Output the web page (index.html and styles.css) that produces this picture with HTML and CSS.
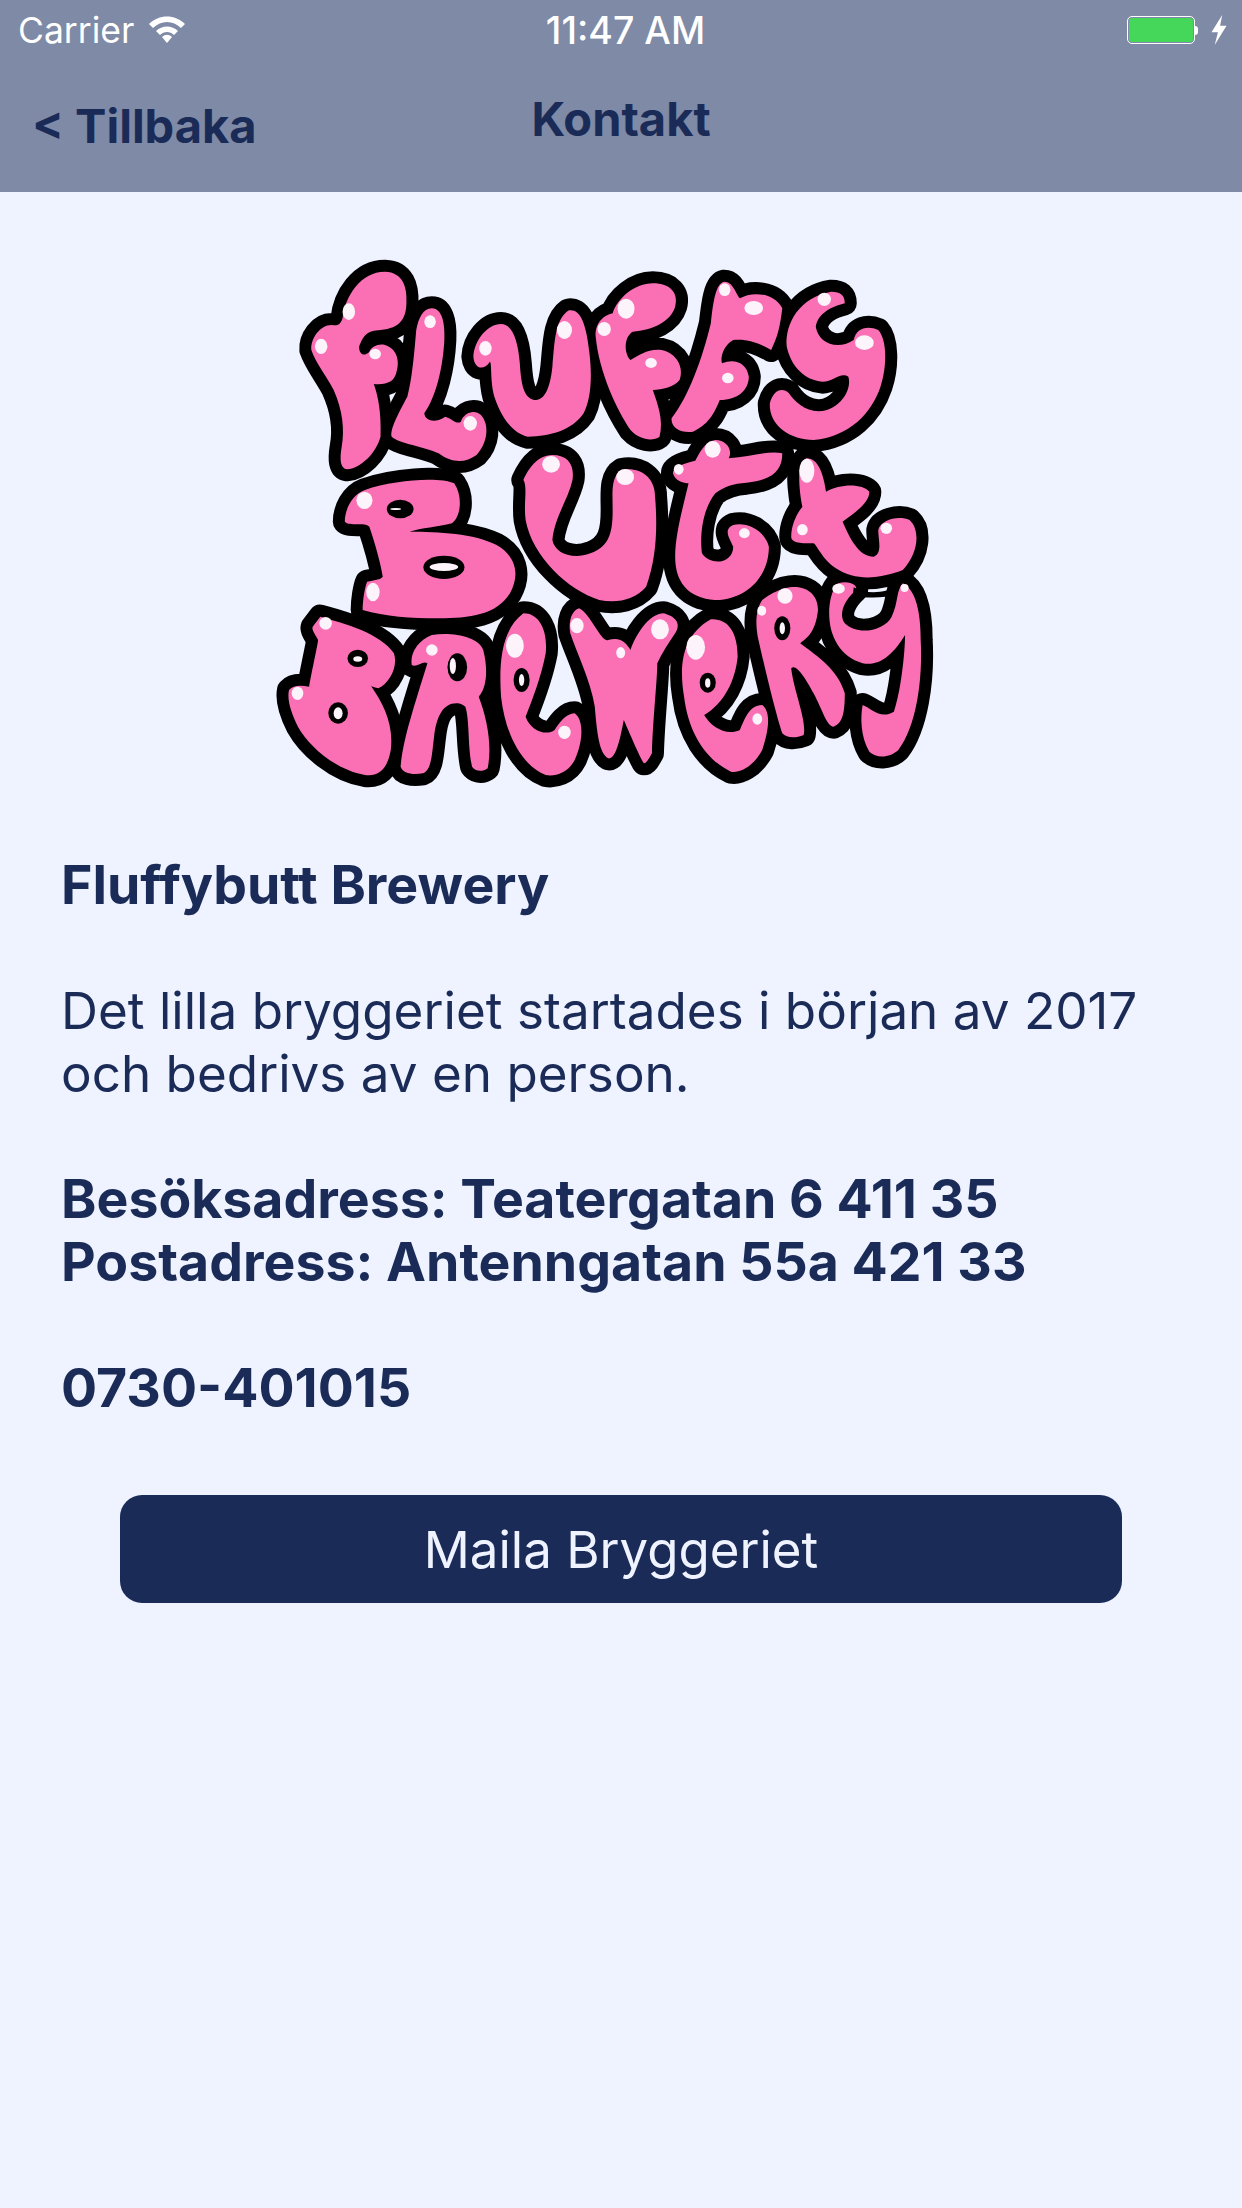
FILE: index.html
```html
<!DOCTYPE html>
<html lang="sv">
<head>
    <meta charset="UTF-8">
    <meta name="viewport" content="width=device-width, initial-scale=1.0">
    <title>Kontakt</title>
    <link rel="stylesheet" href="styles.css">
</head>
<body>
    <!-- Statusrad och navigering -->
    <header class="top">
        <div class="status">
            <div class="status-left">
                <span>Carrier</span>
                <svg class="wifi" viewBox="0 0 38 28">
                    <path d="M1 9 C11 -1 27 -1 37 9 L33 13 C25 5 13 5 5 13 Z"/>
                    <path d="M8 16 C14 10 24 10 30 16 L26 20 C22 16 16 16 12 20 Z"/>
                    <path d="M14 22 C17 19 21 19 24 22 L19 28 Z"/>
                </svg>
            </div>
            <span class="clock">11:47 AM</span>
            <div class="status-right">
                <div class="battery"><div class="battery-level"></div></div>
                <div class="battery-cap"></div>
                <svg class="bolt" viewBox="0 0 16 28"><path d="M11 0 L1 16 L7 16 L4 28 L15 10 L9 10 Z"/></svg>
            </div>
        </div>
        <nav class="nav">
            <a class="back">&lt; Tillbaka</a>
            <h1 class="title">Kontakt</h1>
        </nav>
    </header>

    <main class="content">
        <!-- Logotypen, ritad som bild -->
        <svg class="logo" viewBox="260 240 700 570" role="img" aria-label="Fluffybutt Brewery logotyp">
            <defs>
                <g id="blobs" class="blobs">
                    <g transform="translate(260 240) scale(0.4464 0.3333)">
                        <path d="M185 235 C190 170 225 95 280 95 C320 97 330 140 328 190 C327 235 315 265 270 270 C240 272 232 285 222 320 C222 345 235 350 245 335 C250 320 265 310 280 315 C305 325 315 360 305 400 C300 425 285 435 255 432 C265 470 272 520 270 590 C260 640 225 685 195 688 C180 685 178 660 183 620 C190 570 185 510 165 450 C150 410 125 370 115 330 C113 295 135 255 160 255 C170 255 178 262 185 235 Z"/>
                        <path d="M385 205 C405 205 415 240 413 300 C410 380 395 470 368 520 C370 545 395 550 415 530 C430 535 440 555 450 545 C455 520 480 505 495 525 C515 555 510 610 485 645 C460 670 430 670 400 640 C370 620 310 610 295 590 C290 570 310 520 330 470 C340 420 345 350 350 270 C355 235 365 205 385 205 Z"/>
                        <path d="M540 252 C565 252 578 300 582 370 C585 430 590 475 615 480 C640 480 650 440 655 380 C660 310 660 240 690 212 C715 205 730 240 738 340 C745 420 740 480 725 520 C700 570 650 590 600 590 C565 580 540 530 525 470 C515 420 520 370 515 365 C500 395 480 385 478 350 C480 300 510 252 540 252 Z"/>
                        <path d="M880 130 C920 130 938 160 930 200 C920 245 880 270 835 275 C815 290 815 340 830 360 C850 345 870 325 900 330 C935 340 950 385 940 420 C930 440 900 450 880 450 C890 490 905 540 895 590 C880 605 850 600 830 570 C800 510 760 400 752 290 C750 250 770 225 790 220 C800 175 840 130 880 130 Z"/>
                        <path d="M1040 125 C1060 125 1065 160 1075 175 C1100 155 1150 155 1170 205 C1165 260 1160 290 1145 330 C1120 310 1090 295 1060 300 C1040 315 1030 350 1035 370 C1060 355 1090 365 1095 410 C1095 450 1070 480 1030 480 C1020 510 1010 550 970 575 C945 580 920 565 922 535 C960 470 990 360 1010 250 C1015 190 1020 130 1040 125 Z"/>
                        <path d="M1280 155 C1300 155 1310 165 1310 190 C1280 200 1250 220 1245 260 C1250 305 1290 335 1330 300 C1335 265 1360 255 1385 270 C1405 300 1405 380 1390 440 C1370 520 1320 590 1240 600 C1190 600 1140 560 1142 490 C1150 450 1170 440 1185 460 C1200 490 1230 525 1270 510 C1310 490 1325 440 1318 410 C1300 395 1285 425 1260 425 C1220 420 1190 380 1180 320 C1175 250 1210 170 1280 155 Z"/>
                    </g>
                    <g transform="translate(260 440) scale(0.4464 0.3333)">
                        <path d="M235 150 C300 120 400 110 435 130 C455 170 450 230 430 250 C400 260 360 265 335 275 C400 275 480 280 530 315 C570 345 585 400 560 460 C530 525 470 535 400 535 C340 535 280 530 230 510 C230 480 235 440 240 425 C255 420 270 420 275 410 C270 370 260 320 245 260 C235 245 200 260 190 245 C190 210 205 165 235 150 Z"/>
                        <path d="M655 45 C690 45 705 75 700 120 C690 180 660 230 655 300 C660 340 700 360 740 340 C785 320 790 270 790 210 C790 160 785 110 810 90 C850 80 885 110 885 170 C890 250 890 350 865 440 C840 480 800 490 760 480 C690 450 610 350 595 240 C590 190 600 140 590 120 C600 90 620 45 655 45 Z"/>
                        <path d="M1020 0 C1045 0 1060 30 1050 55 C1100 50 1140 30 1170 40 C1170 90 1150 120 1090 128 C1060 130 1040 140 1020 160 C990 210 985 290 990 340 C1010 380 1060 370 1060 320 C1055 300 1035 270 1060 255 C1090 245 1130 270 1140 320 C1140 400 1100 470 1030 480 C970 480 930 440 930 350 C930 280 950 190 960 130 C950 130 930 125 925 100 C925 80 950 70 975 62 C985 40 995 5 1020 0 Z"/>
                        <path d="M1225 55 C1250 55 1262 100 1268 155 C1300 130 1350 130 1365 155 C1365 190 1330 220 1305 245 C1320 290 1340 350 1375 350 C1395 340 1385 300 1385 270 C1390 240 1430 225 1455 240 C1480 270 1475 340 1440 390 C1400 410 1340 430 1290 385 C1260 360 1245 310 1240 310 C1215 310 1190 310 1190 290 C1190 260 1200 225 1215 200 C1210 170 1205 110 1210 85 C1215 65 1220 55 1225 55 Z"/>
                    </g>
                    <g transform="translate(260 580) scale(0.4464 0.3333)">
                        <path d="M135 110 C190 130 270 160 300 220 C310 260 290 310 265 325 C250 320 245 315 250 320 C275 370 300 430 293 510 C285 570 265 590 235 585 C170 570 110 500 85 440 C70 400 60 360 65 330 C75 315 90 315 110 320 C115 280 130 190 130 180 C125 165 115 150 118 140 Z"/>
                        <path d="M385 165 C430 155 490 170 500 210 C510 260 510 320 490 350 C510 420 520 500 510 565 C495 580 480 570 475 560 C465 500 470 420 460 380 C450 370 445 370 440 370 C410 370 395 410 390 470 C385 520 385 570 365 580 C340 585 320 580 315 560 C320 480 345 380 375 250 C365 240 350 265 340 255 C335 220 355 180 385 165 Z"/>
                        <path d="M590 100 C625 100 645 150 640 220 C630 290 610 360 595 410 C605 450 640 470 660 450 C670 430 685 400 705 400 C725 420 725 480 705 540 C690 580 660 590 640 585 C590 560 550 470 540 350 C535 250 540 150 590 100 Z"/>
                        <path d="M715 85 C740 100 765 190 780 180 C810 170 820 190 830 210 C840 170 870 100 905 100 C930 110 945 130 930 160 C915 190 900 220 890 250 C890 300 880 420 878 520 C870 540 865 550 860 550 C850 530 825 450 815 420 C810 450 800 540 780 535 C760 520 755 460 750 380 C740 300 710 220 695 160 C690 120 700 90 715 85 Z"/>
                        <path d="M1010 118 C1050 115 1070 160 1070 230 C1065 300 1040 370 995 405 C1010 440 1045 470 1075 450 C1085 420 1095 375 1125 375 C1145 395 1140 450 1125 510 C1105 560 1075 580 1055 575 C1000 540 960 460 950 350 C940 270 940 170 1010 118 Z"/>
                        <path d="M1175 25 C1220 10 1250 40 1250 90 C1245 150 1230 170 1210 190 C1250 230 1295 270 1310 340 C1310 400 1305 430 1285 440 C1270 440 1260 390 1240 340 C1220 290 1200 250 1190 265 C1195 330 1225 420 1218 465 C1200 475 1180 475 1170 460 C1155 400 1130 260 1115 170 C1110 130 1110 90 1125 60 C1145 40 1155 35 1175 25 Z"/>
                        <path d="M1295 10 C1320 0 1340 15 1335 30 C1310 60 1295 100 1310 130 C1340 170 1400 150 1415 110 C1430 70 1425 30 1440 10 C1470 30 1480 100 1480 180 C1485 300 1470 440 1430 510 C1410 535 1380 535 1365 515 C1345 470 1345 410 1350 375 C1370 385 1390 420 1420 395 C1435 340 1445 220 1445 165 C1420 220 1390 260 1350 250 C1300 230 1275 170 1275 100 C1275 70 1280 30 1295 10 Z"/>
                    </g>
                </g>
            </defs>
            <use href="#blobs" class="logo-outline"/>
            <use href="#blobs" class="logo-fill"/>

            <!-- Hål i bokstäverna -->
            <g class="logo-holes" transform="translate(260 440) scale(0.4464 0.3333)">
                <ellipse cx="314" cy="207" rx="30" ry="28"/>
                <ellipse cx="412" cy="382" rx="46" ry="35"/>
            </g>
            <g class="logo-holes" transform="translate(260 580) scale(0.4464 0.3333)">
                <ellipse cx="219" cy="235" rx="23" ry="26"/>
                <ellipse cx="175" cy="399" rx="22" ry="32"/>
                <ellipse cx="442" cy="262" rx="22" ry="42"/>
                <ellipse cx="586" cy="300" rx="18" ry="36"/>
                <ellipse cx="1003" cy="308" rx="18" ry="30"/>
                <ellipse cx="1170" cy="145" rx="18" ry="36"/>
                <!-- stänger öglan i sista bokstaven -->
                <path d="M1330 22 C1360 45 1400 40 1432 16 L1428 42 C1400 55 1365 55 1328 48 Z"/>
            </g>

            <!-- Glansdetaljer -->
            <g class="logo-shine" transform="translate(260 240) scale(0.4464 0.3333)">
                <ellipse cx="199" cy="215" rx="14" ry="25"/>
                <ellipse cx="137" cy="319" rx="14" ry="23"/>
                <ellipse cx="258" cy="342" rx="13" ry="16"/>
                <ellipse cx="381" cy="245" rx="13" ry="19"/>
                <ellipse cx="505" cy="325" rx="14" ry="22"/>
                <ellipse cx="682" cy="270" rx="17" ry="27"/>
                <ellipse cx="471" cy="550" rx="15" ry="22"/>
                <ellipse cx="820" cy="206" rx="19" ry="30"/>
                <ellipse cx="771" cy="267" rx="15" ry="21"/>
                <ellipse cx="876" cy="369" rx="13" ry="15"/>
                <ellipse cx="1041" cy="149" rx="13" ry="19"/>
                <ellipse cx="1106" cy="204" rx="21" ry="21"/>
                <ellipse cx="1048" cy="414" rx="13" ry="16"/>
                <ellipse cx="1264" cy="178" rx="15" ry="20"/>
                <ellipse cx="1354" cy="308" rx="21" ry="22"/>
            </g>
            <g class="logo-shine" transform="translate(260 440) scale(0.4464 0.3333)">
                <ellipse cx="234" cy="181" rx="18" ry="26"/>
                <ellipse cx="652" cy="73" rx="20" ry="25"/>
                <ellipse cx="818" cy="111" rx="20" ry="24"/>
                <ellipse cx="1014" cy="28" rx="18" ry="25"/>
                <ellipse cx="938" cy="88" rx="11" ry="16"/>
                <ellipse cx="1085" cy="280" rx="12" ry="15"/>
                <ellipse cx="1225" cy="92" rx="17" ry="36"/>
                <ellipse cx="1215" cy="269" rx="12" ry="17"/>
                <ellipse cx="1403" cy="265" rx="13" ry="17"/>
                <ellipse cx="304" cy="207" rx="12" ry="3"/>
                <ellipse cx="412" cy="381" rx="32" ry="12"/>
            </g>
            <g class="logo-shine" transform="translate(260 580) scale(0.4464 0.3333)">
                <ellipse cx="253" cy="36" rx="15" ry="28"/>
                <ellipse cx="147" cy="130" rx="14" ry="19"/>
                <ellipse cx="84" cy="340" rx="13" ry="20"/>
                <ellipse cx="385" cy="210" rx="13" ry="17"/>
                <ellipse cx="571" cy="197" rx="20" ry="36"/>
                <ellipse cx="682" cy="457" rx="14" ry="20"/>
                <ellipse cx="710" cy="137" rx="15" ry="23"/>
                <ellipse cx="896" cy="148" rx="20" ry="30"/>
                <ellipse cx="808" cy="218" rx="10" ry="17"/>
                <ellipse cx="976" cy="202" rx="21" ry="37"/>
                <ellipse cx="1114" cy="417" rx="11" ry="17"/>
                <ellipse cx="1176" cy="48" rx="17" ry="23"/>
                <ellipse cx="1124" cy="92" rx="10" ry="15"/>
                <ellipse cx="1296" cy="26" rx="14" ry="15"/>
                <ellipse cx="1444" cy="24" rx="9" ry="12"/>
                <ellipse cx="219" cy="237" rx="10" ry="8"/>
                <ellipse cx="175" cy="400" rx="10" ry="18"/>
                <ellipse cx="432" cy="258" rx="7" ry="24"/>
                <ellipse cx="586" cy="300" rx="6" ry="18"/>
                <ellipse cx="1003" cy="309" rx="6" ry="14"/>
                <ellipse cx="1170" cy="145" rx="6" ry="18"/>
            </g>
        </svg>

        <div class="info">
            <p class="bold">Fluffybutt Brewery</p>
            <p>Det lilla bryggeriet startades i början av 2017 och bedrivs av en person.</p>
            <p class="bold">Besöksadress: Teatergatan 6 411 35<br>Postadress: Antenngatan 55a 421 33</p>
            <p class="bold">0730-401015</p>
        </div>

        <button class="mail-btn">Maila Bryggeriet</button>
    </main>
</body>
</html>
```

FILE: styles.css
```css
body {
    margin: 0;
    height: 2208px;
    overflow: hidden;
    background-color: #eff3ff;
    color: #1b2b58;
    font-family: Inter, "Liberation Sans", sans-serif;
}

.top {
    height: 192px;
    background-color: #7f8aa6;
    box-sizing: border-box;
}

.status {
    height: 60px;
    padding: 0 14px 0 18px;
    display: grid;
    grid-template-columns: 1fr auto 1fr;
    align-items: center;
    color: #ffffff;
    font-size: 35.5px;
}

.status-left {
    display: flex;
    align-items: center;
    gap: 14px;
}

.wifi {
    width: 38px;
    height: 28px;
    margin-top: -3px;
    fill: #ffffff;
}

.clock {
    font-size: 37.5px;
    font-weight: 500;
    margin-left: 5px;
}

.status-right {
    display: flex;
    align-items: center;
    justify-content: flex-end;
}

.battery {
    width: 68px;
    height: 28px;
    box-sizing: border-box;
    border: 1px solid #ffffff;
    border-radius: 5px;
    padding: 1px;
}

.battery-level {
    height: 100%;
    background-color: #44d75a;
    border-radius: 3px;
}

.battery-cap {
    width: 3px;
    height: 9px;
    background-color: #ffffff;
    border-radius: 0 3px 3px 0;
    margin-right: 12px;
}

.bolt {
    width: 18px;
    height: 30px;
    flex-shrink: 0;
    fill: #ffffff;
}

.nav {
    display: grid;
    grid-template-columns: 1fr auto 1fr;
    padding: 0 32px;
    align-items: start;
}

.back {
    font-size: 47px;
    font-weight: 700;
    padding-top: 39px;
    line-height: 54px;
}

.title {
    margin: 0;
    font-size: 47px;
    font-weight: 700;
    padding-top: 32px;
    line-height: 54px;
}

.content {
    display: flex;
    flex-direction: column;
}

.logo {
    display: block;
    width: 700px;
    height: 570px;
    margin: 48px 0 0 260px;
}

.blobs path {
    vector-effect: non-scaling-stroke;
}

.logo-outline {
    fill: #000000;
    stroke: #000000;
    stroke-width: 24px;
    stroke-linejoin: round;
}

.logo-fill {
    fill: #fb6fb5;
}

.logo-holes {
    fill: #000000;
}

.logo-shine {
    fill: #fdf3fa;
}

.info {
    padding: 43px 40px 0 61px;
    font-size: 51.2px;
    line-height: 63px;
}

.info p {
    margin: 0 0 62.5px;
}

.bold {
    font-size: 53.6px;
    font-weight: 700;
}

.mail-btn {
    align-self: center;
    width: 1002px;
    height: 108px;
    margin-top: 14px;
    background-color: #1b2b58;
    color: #eff3ff;
    border: none;
    border-radius: 22px;
    font-family: Inter, "Liberation Sans", sans-serif;
    font-size: 51px;
    cursor: pointer;
}
```
